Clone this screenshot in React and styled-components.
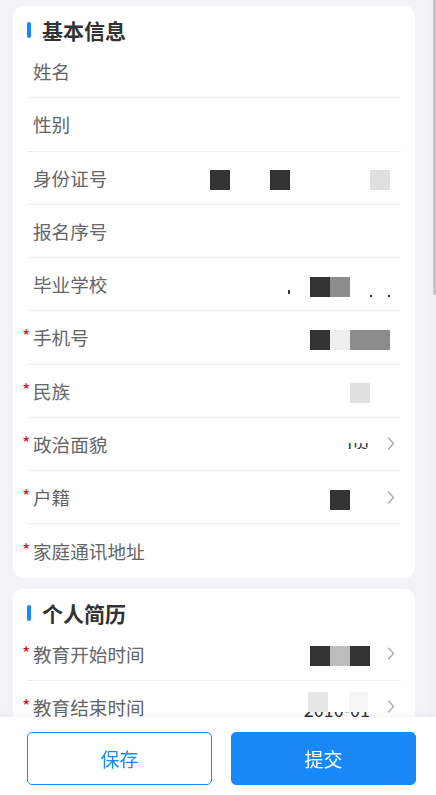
import React from "react";
import styled, { createGlobalStyle } from "styled-components";

const Global = createGlobalStyle`
  html, body { margin: 0; padding: 0; background: #f2f3f7; overflow: hidden; }
  body { font-family: "Noto Sans CJK SC", "Noto Sans", sans-serif; }
  * { box-sizing: border-box; }
`;

const Page = styled.div`
  width: 436px;
  height: 795px;
  padding: 6px 21px 0 13px;
  display: flex;
  flex-direction: column;
  gap: 11px;
`;

const Card = styled.section`
  background: #fff;
  border-radius: 10px;
  padding: 0 14px;
  display: flex;
  flex-direction: column;
  flex: none;
`;

const TitleRow = styled.div`
  height: 39px;
  padding-top: 9px;
  display: flex;
  align-items: center;
  gap: 11px;
`;

const TitleBar = styled.span`
  width: 4px;
  height: 16px;
  border-radius: 2px;
  background: #1989fa;
`;

const Title = styled.h2`
  margin: 0;
  font-size: 21px;
  font-weight: 700;
  color: #323233;
  line-height: 24px;
`;

const Row = styled.div`
  height: 53.25px;
  flex: none;
  padding: 0 6px;
  display: flex;
  align-items: center;
  border-bottom: ${(p) => (p.$last ? "none" : "1px solid #ebedf0")};
`;

const Label = styled.span`
  position: relative;
  font-size: 18.6px;
  color: #646566;
  line-height: 24px;
  white-space: nowrap;
`;

const Star = styled.span`
  position: absolute;
  left: -11px;
  top: 1px;
  color: #ee0a24;
  font-size: 18px;
  line-height: 18px;
`;

const Value = styled.div`
  margin-left: auto;
  margin-right: ${(p) => (p.$chev ? "17px" : "5px")};
  margin-top: ${(p) => (p.$up ? "-4px" : "5px")};
  display: flex;
  flex-direction: column;
  align-items: flex-end;
`;

const Blocks = styled.div`
  display: flex;
  align-items: flex-end;
`;

const Block = styled.span`
  display: block;
  width: ${(p) => p.$w}px;
  height: ${(p) => p.$h || 20}px;
  background: ${(p) => p.$c || "transparent"};
  margin-bottom: ${(p) => p.$mb || 0}px;
`;

const Clip = styled.div`
  width: ${(p) => p.$w}px;
  height: ${(p) => p.$h}px;
  overflow: hidden;
  display: flex;
  justify-content: flex-end;
  align-items: flex-end;
`;

const ClipText = styled.span`
  font-size: 18px;
  line-height: ${(p) => p.$lh}px;
  color: #323233;
  white-space: nowrap;
  flex: none;
`;

const Chevron = () => (
  <svg width="8" height="13" viewBox="0 0 8 13" fill="none">
    <polyline points="1.5,1 6.5,6.5 1.5,12" stroke="#a8a9ad" strokeWidth="1.3" strokeLinecap="round" strokeLinejoin="round" />
  </svg>
);

const Footer = styled.footer`
  position: fixed;
  left: 0;
  right: 0;
  bottom: 0;
  height: 78px;
  background: #fff;
  box-shadow: 0 -2px 6px rgba(0, 0, 0, 0.04);
  padding: 15px 0 0 27px;
  display: grid;
  grid-template-columns: 185px 185px;
  grid-template-rows: 53px;
  column-gap: 19px;
`;

const Button = styled.button`
  font-family: inherit;
  font-size: 19px;
  border-radius: 5px;
  border: 1px solid #1989fa;
  background: ${(p) => (p.$primary ? "#1989fa" : "#fff")};
  color: ${(p) => (p.$primary ? "#fff" : "#1989fa")};
  cursor: pointer;
`;

const ScrollTrack = styled.div`
  position: fixed;
  top: 0;
  right: 0;
  width: 8px;
  height: 795px;
  background: #f0f1f5;
`;

const ScrollThumb = styled.div`
  position: absolute;
  top: 0;
  right: 0;
  width: 3px;
  height: 295px;
  border-radius: 0 0 2px 2px;
  background: #c4c5c9;
`;

const D = "#333333";
const G = "#8c8c8c";
const L = "#e0e0e0";

const basic = [
  { label: "姓名" },
  { label: "性别" },
  {
    label: "身份证号",
    blocks: [[20, D], [40], [20, D], [80], [20, L]],
  },
  { label: "报名序号" },
  {
    label: "毕业学校",
    blocks: [[2, D, 4, 3], [20], [20, D], [20, G], [20], [2, D, 2, 0], [16], [2, D, 2, 0]],
  },
  { label: "手机号", req: true, blocks: [[20, D], [20, "#eeeeee"], [40, G]] },
  { label: "民族", req: true, blocks: [[20, L], [20]] },
  { label: "政治面貌", req: true, chev: true, clip: { w: 22, h: 6, text: "团员", lh: 15 } },
  { label: "户籍", req: true, chev: true, blocks: [[20, D], [20]] },
  { label: "家庭通讯地址", req: true },
];

const resume = [
  { label: "教育开始时间", req: true, chev: true, blocks: [[20, D], [20, "#bdbdbd"], [20, D]] },
  {
    label: "教育结束时间",
    req: true,
    chev: true,
    blocks: [[20, "#e6e6e6"], [21], [19, "#f6f6f6"], [2]],
    clip: { w: 67, h: 5, text: "2010-01", lh: 15 },
    up: true,
  },
  { label: "教育形式", req: true, chev: true },
];

function FormRow({ row, last }) {
  return (
    <Row $last={last}>
      <Label>
        {row.req && <Star>*</Star>}
        {row.label}
      </Label>
      {(row.blocks || row.clip) && (
        <Value $chev={row.chev} $up={row.up}>
          {row.blocks && (
            <Blocks>
              {row.blocks.map(([w, c, h, mb], i) => (
                <Block key={i} $w={w} $c={c} $h={h} $mb={mb} />
              ))}
            </Blocks>
          )}
          {row.clip && (
            <Clip $w={row.clip.w} $h={row.clip.h}>
              <ClipText $lh={row.clip.lh}>{row.clip.text}</ClipText>
            </Clip>
          )}
        </Value>
      )}
      {row.chev && <Chevron />}
    </Row>
  );
}

function Section({ title, rows }) {
  return (
    <Card>
      <TitleRow>
        <TitleBar />
        <Title>{title}</Title>
      </TitleRow>
      {rows.map((r, i) => (
        <FormRow key={r.label} row={r} last={i === rows.length - 1} />
      ))}
    </Card>
  );
}

export default function App() {
  return (
    <>
      <Global />
      <Page>
        <Section title="基本信息" rows={basic} />
        <Section title="个人简历" rows={resume} />
      </Page>
      <ScrollTrack>
        <ScrollThumb />
      </ScrollTrack>
      <Footer>
        <Button>保存</Button>
        <Button $primary>提交</Button>
      </Footer>
    </>
  );
}
